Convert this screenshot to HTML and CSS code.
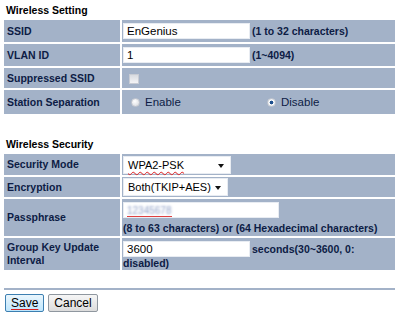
FILE: index.html
```html
<!DOCTYPE html>
<html>
<head>
<meta charset="utf-8">
<link rel="stylesheet" href="styles.css">
</head>
<body>
<div class="page">
  <div class="heading">Wireless Setting</div>
  <table class="form">
    <tr class="r22">
      <td class="label">SSID</td>
      <td class="value"><div class="line"><span class="input w126">EnGenius</span><span class="note">(1 to 32 characters)</span></div></td>
    </tr>
    <tr class="r22">
      <td class="label">VLAN ID</td>
      <td class="value"><div class="line"><span class="input w126">1</span><span class="note">(1~4094)</span></div></td>
    </tr>
    <tr class="r20">
      <td class="label">Suppressed SSID</td>
      <td class="value"><span class="check"></span></td>
    </tr>
    <tr class="r24">
      <td class="label">Station Separation</td>
      <td class="value">
        <div class="radios">
          <label class="radio"><span class="dot"></span>Enable</label>
          <label class="radio"><span class="dot on"></span>Disable</label>
        </div>
      </td>
    </tr>
  </table>

  <div class="heading sec2">Wireless Security</div>
  <table class="form">
    <tr class="r21">
      <td class="label">Security Mode</td>
      <td class="value"><span class="select w108"><span class="spell">WPA2-PSK</span><span class="arrow"></span></span></td>
    </tr>
    <tr class="r20">
      <td class="label">Encryption</td>
      <td class="value"><span class="select w105">Both(TKIP+AES)<span class="arrow"></span></span></td>
    </tr>
    <tr class="r37">
      <td class="label">Passphrase</td>
      <td class="value">
        <span class="input w156"><span class="blur">12345678</span></span>
        <div class="note block">(8 to 63 characters) or (64 Hexadecimal characters)</div>
      </td>
    </tr>
    <tr class="r32">
      <td class="label">Group Key Update Interval</td>
      <td class="value flow"><span class="input w126">3600</span><span class="note">seconds(30~3600, 0:</span> <span class="note2">disabled)</span></td>
    </tr>
  </table>
  <div class="rule"></div>
  <div class="buttons">
    <button class="btn save"><span class="ul">Save</span></button>
    <button class="btn">Cancel</button>
  </div>
</div>
</body>
</html>
```

FILE: styles.css
```css
html, body {
  margin: 0;
  padding: 0;
  background: #ffffff;
}
body {
  font-family: "Liberation Sans", Arial, sans-serif;
  width: 400px;
  height: 319px;
  overflow: hidden;
}
.page {
  padding: 4px 0 0 2px;
}
.heading {
  font-weight: bold;
  font-size: 10.5px;
  color: #000;
  padding-left: 4px;
  height: 13px;
  line-height: 13px;
}
.sec2 {
  margin-top: 22px;
}
.form {
  border-collapse: separate;
  border-spacing: 2px;
  width: 395px;
  margin-top: 1px;
}
.form td {
  background: #a3b2c8;
  padding: 0 0 0 2px;
  vertical-align: middle;
  color: #0d1c45;
  font-size: 10.5px;
  font-weight: bold;
}
.form td.label {
  width: 113px;
  padding-left: 3px;
  line-height: 13px;
}
.form td.value {
  padding-left: 1px;
  line-height: 12px;
}
.form td.flow {
  line-height: 12px;
  padding-top: 2px;
}
.r20 { height: 20px; }
.r21 { height: 21px; }
.r22 { height: 22px; }
.r24 { height: 24px; }
.r32 { height: 32px; }
.r37 { height: 37px; }
.line {
  display: flex;
  align-items: center;
}
.input {
  display: inline-block;
  box-sizing: border-box;
  height: 16px;
  background: #fff;
  border: 1px solid #e8ecf2;
  font-family: "Liberation Sans", Arial, sans-serif;
  font-weight: normal;
  font-size: 11.5px;
  line-height: 14px;
  color: #000;
  padding-left: 3px;
  vertical-align: middle;
}
.w126 { width: 127px; }
.w156 { width: 156px; }
.note {
  margin-left: 2px;
}
.flow .note {
  vertical-align: middle;
}
.note.block {
  margin-left: 0;
  margin-top: 4px;
}
.check {
  display: inline-block;
  width: 8px;
  height: 8px;
  margin-left: 6px;
  margin-top: 4px;
  border: 1px solid #c8ccd4;
  background: linear-gradient(#d8dbe0, #f4f4f6);
}
.radios {
  display: grid;
  grid-template-columns: 1fr 1fr;
}
.radio {
  display: flex;
  align-items: center;
  font-weight: normal;
  font-size: 11.5px;
  color: #0d1c45;
  padding-left: 8px;
}
.dot {
  display: inline-block;
  width: 7px;
  height: 7px;
  border-radius: 50%;
  border: 1px solid #c4c8d0;
  background: radial-gradient(circle at 40% 35%, #ffffff, #d3d6dc);
  margin-right: 5px;
  box-sizing: content-box;
}
.dot.on {
  background: radial-gradient(circle, #1d4f8e 0 1.6px, #ffffff 2.2px, #d3d6dc);
}
.select {
  position: relative;
  display: inline-block;
  box-sizing: border-box;
  height: 18px;
  background: #fff;
  border: 1px solid #e8ecf2;
  font-weight: normal;
  font-size: 11px;
  line-height: 16px;
  color: #000;
  padding-left: 4px;
  vertical-align: middle;
}
.w108 { width: 108px; }
.w105 { width: 105px; }
.arrow {
  position: absolute;
  right: 6px;
  top: 7px;
  width: 0;
  height: 0;
  border-left: 3px solid transparent;
  border-right: 3px solid transparent;
  border-top: 4px solid #111;
}
.spell {
  text-decoration: underline wavy #e02020;
  text-decoration-thickness: 1px;
  text-underline-offset: 2px;
}
.ul {
  text-decoration: underline #d42020;
  text-decoration-thickness: 1px;
  text-underline-offset: 2px;
}
.blur {
  display: inline-block;
  color: transparent;
  text-shadow: 0 0 2.5px #8b9cc4;
  font-size: 10px;
  line-height: 11px;
  border-bottom: 1px solid #e04040;
}
.rule {
  width: 391px;
  height: 2px;
  background: #a3b2c8;
  margin: 16px 0 0 2px;
}
.buttons {
  display: flex;
  gap: 4px;
  padding: 4px 0 0 3px;
}
.btn {
  font-family: "Liberation Sans", Arial, sans-serif;
  font-size: 12px;
  height: 18px;
  padding: 0 5px;
  border: 1px solid #8f979f;
  border-radius: 2px;
  background: linear-gradient(#f6f6f6, #dcdcdc);
  color: #000;
  line-height: 14px;
}
.btn.save {
  border-color: #3c7fb1;
  background: linear-gradient(#eaf6fd, #bee6fd);
}
```
